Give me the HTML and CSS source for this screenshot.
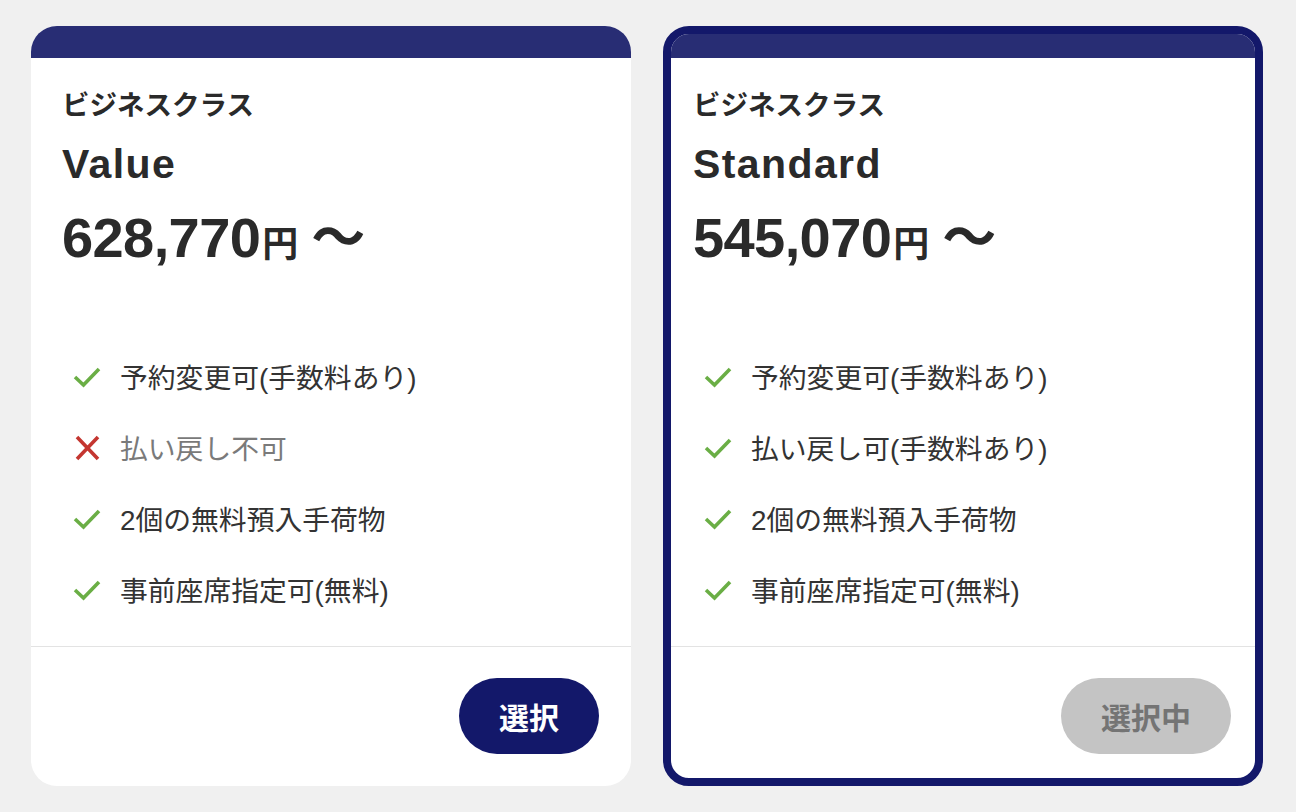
FILE: index.html
```html
<!DOCTYPE html>
<html lang="ja">
<head>
<meta charset="utf-8">
<title>Fare options</title>
<link rel="stylesheet" href="styles.css">
</head>
<body>
<div class="cards">
  <div class="card">
    <div class="card-head"></div>
    <div class="card-body">
      <div class="cabin">ビジネスクラス</div>
      <div class="fare-name">Value</div>
      <div class="price"><span class="amount">628,770</span><span class="yen">円</span><span class="tilde">〜</span></div>
      <ul class="features">
        <li class="feature"><svg class="icon" viewBox="0 0 28 22"><polyline points="2,11 10.5,19 26,3" class="check"/></svg><span>予約変更可(手数料あり)</span></li>
        <li class="feature off"><svg class="icon" viewBox="0 0 28 26"><path d="M4 2 L25 24 M25 2 L4 24" class="cross"/></svg><span>払い戻し不可</span></li>
        <li class="feature"><svg class="icon" viewBox="0 0 28 22"><polyline points="2,11 10.5,19 26,3" class="check"/></svg><span>2個の無料預入手荷物</span></li>
        <li class="feature"><svg class="icon" viewBox="0 0 28 22"><polyline points="2,11 10.5,19 26,3" class="check"/></svg><span>事前座席指定可(無料)</span></li>
      </ul>
    </div>
    <div class="card-foot">
      <button class="btn">選択</button>
    </div>
  </div>
  <div class="card selected">
    <div class="card-head"></div>
    <div class="card-body">
      <div class="cabin">ビジネスクラス</div>
      <div class="fare-name">Standard</div>
      <div class="price"><span class="amount">545,070</span><span class="yen">円</span><span class="tilde">〜</span></div>
      <ul class="features">
        <li class="feature"><svg class="icon" viewBox="0 0 28 22"><polyline points="2,11 10.5,19 26,3" class="check"/></svg><span>予約変更可(手数料あり)</span></li>
        <li class="feature"><svg class="icon" viewBox="0 0 28 22"><polyline points="2,11 10.5,19 26,3" class="check"/></svg><span>払い戻し可(手数料あり)</span></li>
        <li class="feature"><svg class="icon" viewBox="0 0 28 22"><polyline points="2,11 10.5,19 26,3" class="check"/></svg><span>2個の無料預入手荷物</span></li>
        <li class="feature"><svg class="icon" viewBox="0 0 28 22"><polyline points="2,11 10.5,19 26,3" class="check"/></svg><span>事前座席指定可(無料)</span></li>
      </ul>
    </div>
    <div class="card-foot">
      <button class="btn btn-current">選択中</button>
    </div>
  </div>
</div>
</body>
</html>
```

FILE: styles.css
```css
* { box-sizing: border-box; }
html, body {
  margin: 0;
  padding: 0;
  background: #f0f0f0;
}
body {
  font-family: "Liberation Sans", "Noto Sans CJK JP", sans-serif;
  color: #2a2a2a;
}
.cards {
  display: flex;
  gap: 32px;
  padding: 26px 0 0 31px;
}
.card {
  width: 600px;
  height: 760px;
  background: #ffffff;
  border-radius: 26px;
  overflow: hidden;
  display: flex;
  flex-direction: column;
}
.card-head {
  height: 32px;
  background: #282d74;
  flex: none;
}
.card-body {
  flex: 1;
  padding: 30px 31px 0 31px;
}
.cabin {
  font-size: 27.5px;
  line-height: 36px;
  font-weight: 700;
}
.fare-name {
  margin-top: 18px;
  font-size: 41px;
  letter-spacing: 1.4px;
  line-height: 44px;
  font-weight: 700;
}
.price {
  margin-top: 20px;
  height: 64px;
  line-height: 64px;
  font-weight: 700;
  white-space: nowrap;
}
.amount {
  font-size: 56px;
  letter-spacing: -0.6px;
}
.yen {
  font-size: 36px;
  margin-left: 2px;
}
.tilde {
  font-size: 54px;
  margin-left: 13px;
}
.features {
  list-style: none;
  margin: 71px 0 0 0;
  padding: 0 0 0 11px;
}
.feature {
  height: 71px;
  display: flex;
  align-items: center;
  gap: 19px;
  font-size: 27.8px;
  color: #333333;
}
.feature span {
  position: relative;
  top: -1px;
}
.feature.off {
  color: #7a7a7a;
}
.icon {
  width: 28px;
  height: 26px;
  flex: none;
}
.check {
  fill: none;
  stroke: #6aae45;
  stroke-width: 3.6;
  stroke-linecap: butt;
  stroke-linejoin: miter;
}
.cross {
  fill: none;
  stroke: #c43630;
  stroke-width: 3.6;
}
.card-foot {
  flex: none;
  border-top: 1px solid #e3e3e3;
  padding: 31px 32px 32px;
  display: flex;
  justify-content: flex-end;
}
.btn {
  height: 76px;
  min-width: 140px;
  padding: 0 40px;
  border: none;
  border-radius: 38px;
  background: #13186a;
  color: #ffffff;
  font-family: "Noto Sans CJK JP", "Liberation Sans", sans-serif;
  font-size: 30px;
  font-weight: 700;
  cursor: pointer;
}
.btn-current {
  background: #c4c4c4;
  color: #747474;
}
.card.selected {
  border: 8px solid #13186a;
}
.card.selected .card-head {
  height: 24px;
}
.card.selected .card-body {
  padding-left: 22px;
  padding-right: 23px;
}
.card.selected .card-foot {
  padding: 31px 24px 24px;
}
```
